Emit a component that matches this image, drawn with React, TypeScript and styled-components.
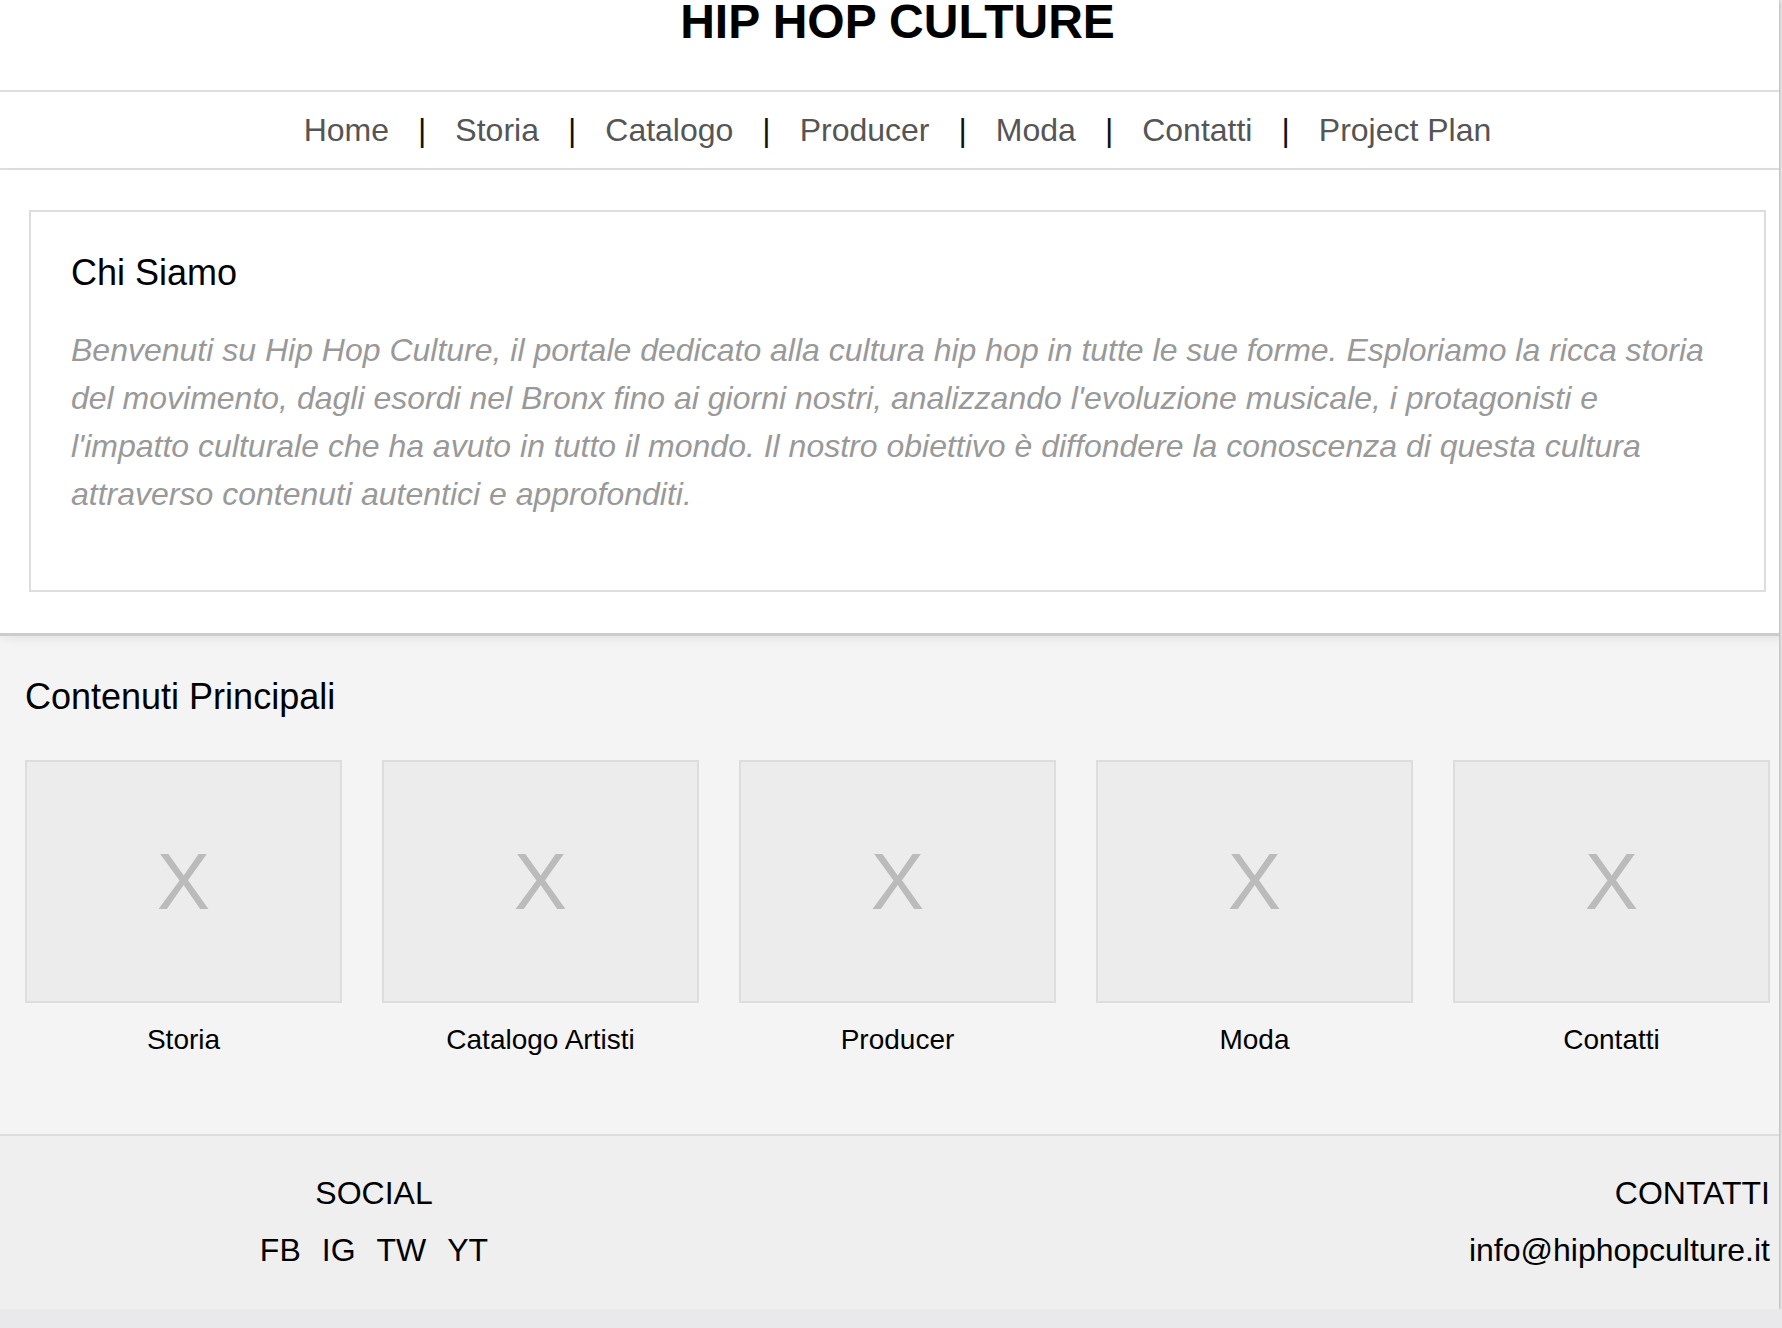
import React from "react";
import styled, { createGlobalStyle } from "styled-components";

const GlobalStyle = createGlobalStyle`
  html, body {
    margin: 0;
    padding: 0;
    background: #e9e9eb;
  }
  body {
    font-family: "Liberation Sans", Arial, Helvetica, sans-serif;
    color: #000;
  }
  * { box-sizing: border-box; }
`;

const Frame = styled.div`
  width: 1779px;
  overflow: hidden;
  background: #ffffff;
  box-shadow: 0 2px 4px rgba(0, 0, 0, 0.25), 1px 0 2px rgba(0, 0, 0, 0.08);
`;

const Page = styled.div`
  width: 1795px;
`;

const Header = styled.header`
  height: 92px;
  border-bottom: 2px solid #dddddd;
  display: flex;
  flex-direction: column;
  align-items: center;
`;

const Title = styled.h1`
  margin: -6px 0 0;
  font-size: 48px;
  font-weight: bold;
  line-height: normal;
`;

const Nav = styled.nav`
  height: 78px;
  border-bottom: 2px solid #dddddd;
  display: flex;
  justify-content: center;
  align-items: center;
  gap: 29px;
  font-size: 32px;
`;

const NavLink = styled.a`
  color: #555555;
  text-decoration: none;
`;

const Sep = styled.span`
  color: #111111;
`;

const MainSection = styled.section`
  position: relative;
  z-index: 1;
  background: #ffffff;
  padding: 40px 29px 41px;
  border-bottom: 3px solid #cccccc;
  box-shadow: 0 4px 10px -2px rgba(0, 0, 0, 0.08);
`;

const AboutBox = styled.div`
  border: 2px solid #dddddd;
  padding: 40px 40px;
`;

const SectionTitle = styled.h2`
  margin: 0;
  font-size: 36px;
  font-weight: normal;
  line-height: normal;
`;

const AboutText = styled.p`
  margin: 32px 0;
  font-size: 32px;
  font-style: italic;
  color: #999999;
  line-height: 48px;
`;

const ContentSection = styled.section`
  background: #f4f4f4;
  padding: 40px 25px 78px;
`;

const ContentTitle = styled(SectionTitle)`
  margin-bottom: 42px;
`;

const CardGrid = styled.div`
  display: grid;
  grid-template-columns: repeat(5, 1fr);
  gap: 40px;
`;

const Card = styled.div`
  text-align: center;
`;

const Thumb = styled.div`
  height: 243px;
  border: 2px solid #dddddd;
  background: #ececec;
  display: flex;
  align-items: center;
  justify-content: center;
  font-size: 80px;
  color: #bbbbbb;
`;

const CardLabel = styled.div`
  margin-top: 21px;
  font-size: 28px;
  line-height: 32px;
`;

const Footer = styled.footer`
  background: #efefef;
  border-top: 2px solid #dddddd;
  padding: 39px 25px 40px;
  display: flex;
  justify-content: space-between;
  font-size: 32px;
  line-height: 37px;
`;

const FooterCol = styled.div<{ $align: "center" | "right" }>`
  width: ${(p) => (p.$align === "center" ? "40%" : "auto")};
  text-align: ${(p) => p.$align};
`;

const FooterTitle = styled.div`
  margin-bottom: 20px;
  text-transform: uppercase;
`;

const SocialRow = styled.div`
  display: flex;
  justify-content: center;
  gap: 21px;
`;

const SocialLink = styled.a`
  color: #000;
  text-decoration: none;
`;

const navItems = ["Home", "Storia", "Catalogo", "Producer", "Moda", "Contatti", "Project Plan"];
const cards = ["Storia", "Catalogo Artisti", "Producer", "Moda", "Contatti"];
const socials = ["FB", "IG", "TW", "YT"];

export default function App() {
  return (
    <>
      <GlobalStyle />
      <Frame>
        <Page>
          <Header>
            <Title>HIP HOP CULTURE</Title>
          </Header>
          <Nav>
            {navItems.map((item, i) => (
              <React.Fragment key={item}>
                {i > 0 && <Sep>|</Sep>}
                <NavLink href="#">{item}</NavLink>
              </React.Fragment>
            ))}
          </Nav>
          <MainSection>
            <AboutBox>
              <SectionTitle>Chi Siamo</SectionTitle>
              <AboutText>
                Benvenuti su Hip Hop Culture, il portale dedicato alla cultura hip hop in tutte le sue forme.
                Esploriamo la ricca storia del movimento, dagli esordi nel Bronx fino ai giorni nostri,
                analizzando l'evoluzione musicale, i protagonisti e l'impatto culturale che ha avuto in tutto il
                mondo. Il nostro obiettivo è diffondere la conoscenza di questa cultura attraverso contenuti
                autentici e approfonditi.
              </AboutText>
            </AboutBox>
          </MainSection>
          <ContentSection>
            <ContentTitle>Contenuti Principali</ContentTitle>
            <CardGrid>
              {cards.map((c) => (
                <Card key={c}>
                  <Thumb>X</Thumb>
                  <CardLabel>{c}</CardLabel>
                </Card>
              ))}
            </CardGrid>
          </ContentSection>
          <Footer>
            <FooterCol $align="center">
              <FooterTitle>Social</FooterTitle>
              <SocialRow>
                {socials.map((s) => (
                  <SocialLink key={s} href="#">
                    {s}
                  </SocialLink>
                ))}
              </SocialRow>
            </FooterCol>
            <FooterCol $align="right">
              <FooterTitle>Contatti</FooterTitle>
              <div>info@hiphopculture.it</div>
            </FooterCol>
          </Footer>
        </Page>
      </Frame>
    </>
  );
}
